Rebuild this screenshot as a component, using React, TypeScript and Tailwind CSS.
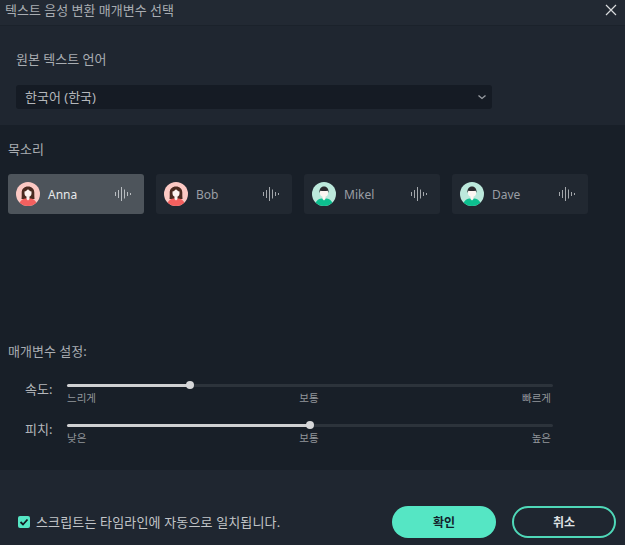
const FONT = "font-['Noto_Sans','Noto_Sans_CJK_KR',sans-serif]";

const Wave = ({ color }: { color: string }) => (
  <svg width="18" height="16" viewBox="0 0 18 16" fill="none" stroke={color} strokeWidth="1">
    <path d="M1.500 6v4M4.500 4v8M7.500 1v14M10.500 3.500v9M13.500 6v4M16.500 7v2" />
  </svg>
);

const Woman = () => (
  <svg width="24" height="24" viewBox="0 0 24 24" className="shrink-0">
    <defs>
      <clipPath id="cw">
        <circle cx="12" cy="12" r="12" />
      </clipPath>
    </defs>
    <g clipPath="url(#cw)">
      <rect width="24" height="24" fill="#fcc9c4" />
      <path d="M5.500 17c.3-2 .2-4.500.2-6.500 0-3.500 2.500-6 6.300-6s6.300 2.500 6.300 6c0 2 0 4.500.2 6.500z" fill="#4a2a20" />
      <path d="M8.500 9.500c1.500-.3 2.800-1.200 3.500-2.500.7 1.300 2 2.200 3.500 2.500v2c0 2-1.500 3.500-3.500 3.500s-3.500-1.500-3.500-3.500z" fill="#fdf3f0" />
      <path d="M3 24c0-4 2.500-7 6.500-7.500h5c4 .5 6.500 3.500 6.500 7.500z" fill="#f4605f" />
      <path d="M10.500 14.500h3v2.500L12 18.500 10.500 17z" fill="#fdf3f0" />
    </g>
  </svg>
);

const Man = () => (
  <svg width="24" height="24" viewBox="0 0 24 24" className="shrink-0">
    <defs>
      <clipPath id="cm">
        <circle cx="12" cy="12" r="12" />
      </clipPath>
    </defs>
    <g clipPath="url(#cm)">
      <rect width="24" height="24" fill="#bce9dc" />
      <path d="M3 24c0-4 2.500-7 6.500-7.500h5c4 .5 6.500 3.500 6.500 7.500z" fill="#0cbf8f" />
      <path d="M10.500 14.500h3v2.500L12 18.500 10.500 17z" fill="#fdf6f2" />
      <path d="M8 9h8v2.500c0 2-1.800 3.500-4 3.500s-4-1.500-4-3.500z" fill="#fdf6f2" />
      <path d="M7.500 11C7 7 9 4.500 12 4.500S17 7 16.500 11l-.8-2.300c-2.500.3-5 .3-7.400 0z" fill="#2b2b2f" />
    </g>
  </svg>
);

const voices = [
  { name: "Anna", female: true, active: true },
  { name: "Bob", female: true, active: false },
  { name: "Mikel", female: false, active: false },
  { name: "Dave", female: false, active: false },
];

const VoiceCard = ({ name, female, active }: { name: string; female: boolean; active: boolean }) => (
  <div
    className={`flex h-10 w-[136px] items-center rounded-[3px] pl-2 pr-3 ${
      active ? "bg-[#4d545b]" : "bg-[#212831]"
    }`}
  >
    {female ? <Woman /> : <Man />}
    <span className={`ml-2 flex-1 pt-[2px] text-xs ${active ? "text-[#e6e8ea]" : "text-[#9a9ea4]"}`}>{name}</span>
    <Wave color={active ? "#b9bdc1" : "#a3a7ab"} />
  </div>
);

const Slider = ({
  label,
  percent,
  marks,
}: {
  label: string;
  percent: number;
  marks: string[];
}) => (
  <div className="flex h-10">
    <div className="w-[67px] pl-[25px] pt-[2px] text-[13px] leading-[20px] text-[#b4b7bb]">{label}</div>
    <div className="w-[486px]">
      <div className="relative mt-[7px] h-[3px] rounded-full bg-[#2c333b]">
        <div className="h-[3px] rounded-full bg-[#cfd0d2]" style={{ width: `${percent}%` }} />
        <div
          className="absolute top-[-3px] ml-[-4px] h-2 w-2 rounded-full bg-[#d6d7d9]"
          style={{ left: `${percent}%` }}
        />
      </div>
      <div className="mt-[4px] flex justify-between pr-[2px] text-[10.500px] leading-[15px] text-[#92969b]">
        {marks.map((m) => (
          <span key={m}>{m}</span>
        ))}
      </div>
    </div>
  </div>
);

export default function App() {
  return (
    <div className={`flex h-[545px] w-[625px] flex-col overflow-hidden bg-[#181f28] ${FONT}`}>
      <div className="flex h-[26px] items-start justify-between border-b border-[#1b222b] bg-[#222933] pl-[5px] pr-[8px]">
        <span className="text-[13px] leading-[20px] text-[#a9adb2]">텍스트 음성 변환 매개변수 선택</span>
        <svg width="12" height="12" viewBox="0 0 12 12" stroke="#d9dbdd" strokeWidth="1.200" className="mt-[4px]">
          <path d="M1 1l10 10M11 1L1 11" />
        </svg>
      </div>

      <div className="h-[99px] bg-[#1f2630] pl-4 pt-[23px]">
        <div className="text-[13px] leading-[20px] text-[#a9adb2]">원본 텍스트 언어</div>
        <div className="mt-[16px] flex h-6 w-[476px] items-center justify-between rounded-[3px] bg-[#151b24] pl-[9px] pr-[4px] text-[13px] text-[#b4b7bb]">
          <span className="pt-[1px]">한국어 (한국)</span>
          <svg width="12" height="12" viewBox="0 0 12 12" fill="none" stroke="#9a9ea4" strokeWidth="1.300">
            <path d="M2.500 4.500L6 7.500l3.500-3" />
          </svg>
        </div>
      </div>

      <div className="h-[345px] px-2">
        <div className="mt-[14px] text-[13px] leading-[20px] text-[#a9adb2]">목소리</div>
        <div className="mt-[15px] flex gap-3">
          {voices.map((v) => (
            <VoiceCard key={v.name} {...v} />
          ))}
        </div>
        <div className="mt-[127px] text-[13px] leading-[20px] text-[#a9adb2]">매개변수 설정:</div>
        <div className="ml-[-8px] mt-[16px]">
          <Slider label="속도:" percent={25.3} marks={["느리게", "보통", "빠르게"]} />
          <Slider label="피치:" percent={50} marks={["낮은", "보통", "높은"]} />
        </div>
      </div>

      <div className="flex flex-1 items-end justify-between bg-[#1f2630] pb-[7px] pl-[18px] pr-[9px]">
        <div className="mb-[6px] flex items-center gap-[6px]">
          <div className="flex h-3 w-3 items-center justify-center rounded-[2px] bg-[#55e6c4]">
            <svg width="10" height="10" viewBox="0 0 10 10" fill="none" stroke="#111820" strokeWidth="1.800">
              <path d="M1.500 5l2.500 2.500 4.500-5" />
            </svg>
          </div>
          <span className="text-[13px] tracking-[0.15px] text-[#c2c5c8]">스크립트는 타임라인에 자동으로 일치됩니다.</span>
        </div>
        <div className="flex gap-4">
          <button className="h-8 w-[104px] rounded-full bg-[#55e6c4] pt-[1px] text-xs font-bold text-[#12202a]">확인</button>
          <button className="h-8 w-[104px] rounded-full border-2 border-[#4fd8b8] pt-[1px] text-xs font-bold text-[#dfe1e3]">
            취소
          </button>
        </div>
      </div>
    </div>
  );
}
